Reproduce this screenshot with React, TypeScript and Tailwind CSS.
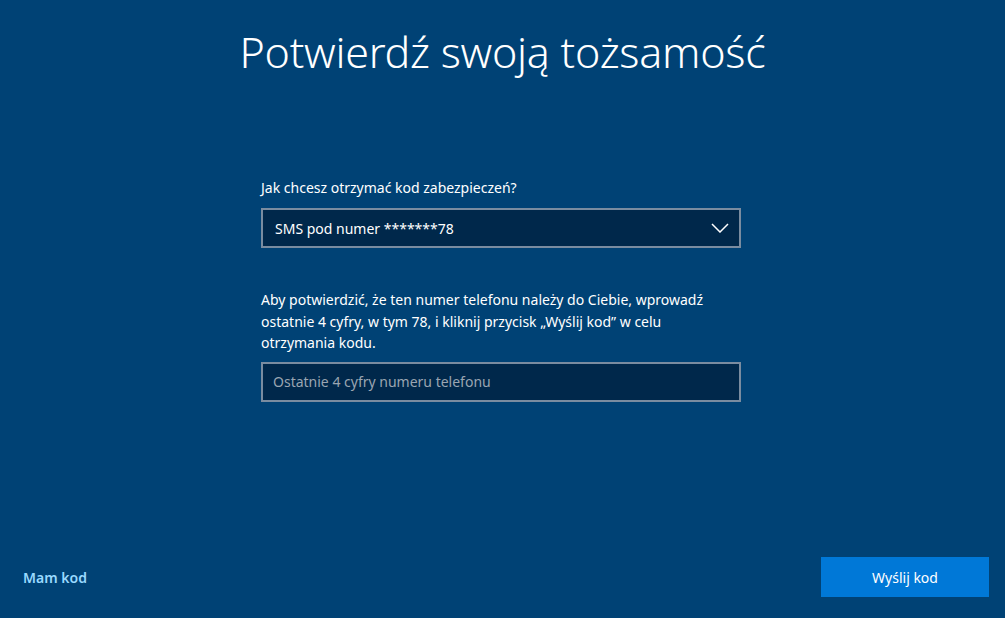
import React from "react";

export default function App() {
  return (
    <div
      className="w-full h-[618px] bg-[#004275] text-white flex flex-col overflow-hidden"
      style={{ fontFamily: '"Noto Sans", "Open Sans", sans-serif' }}
    >
      {/* Title */}
      <h1 className="text-center text-[43px] font-light leading-none pt-[30px] tracking-[-0.25px]">
        Potwierdź swoją tożsamość
      </h1>

      {/* Form */}
      <div className="flex-1 flex justify-center">
        <div className="w-[480px] mr-[3px] pt-[105px] text-[14px]">
          <label className="block leading-5 mb-[10px]">
            Jak chcesz otrzymać kod zabezpieczeń?
          </label>
          <div className="h-[40px] border-2 border-[#7a8ca0] bg-[#00284b] flex items-center justify-between pl-[12px] pr-[10px]">
            <span>SMS pod numer *******78</span>
            <svg width="18" height="10" viewBox="0 0 18 10" fill="none">
              <path d="M1 1l8 8 8-8" stroke="white" strokeWidth="1.5" />
            </svg>
          </div>

          <p className="mt-[41px] w-[455px] leading-[21.5px]">
            Aby potwierdzić, że ten numer telefonu należy do Ciebie, wprowadź ostatnie 4 cyfry, w tym 78, i kliknij przycisk „Wyślij kod” w celu otrzymania kodu.
          </p>
          <div className="mt-[8px] h-[40px] border-2 border-[#7a8ca0] bg-[#00284b] flex items-center pl-[10px]">
            <span className="text-[#9aa5b1]">Ostatnie 4 cyfry numeru telefonu</span>
          </div>
        </div>
      </div>

      {/* Footer */}
      <div className="flex items-center justify-between pl-[23px] pr-[16px] pb-[21px]">
        <span className="text-[14px] font-semibold text-[#99d9ff]">Mam kod</span>
        <button className="w-[168px] h-[40px] bg-[#0078d7] text-[14px] text-white">
          Wyślij kod
        </button>
      </div>
    </div>
  );
}
